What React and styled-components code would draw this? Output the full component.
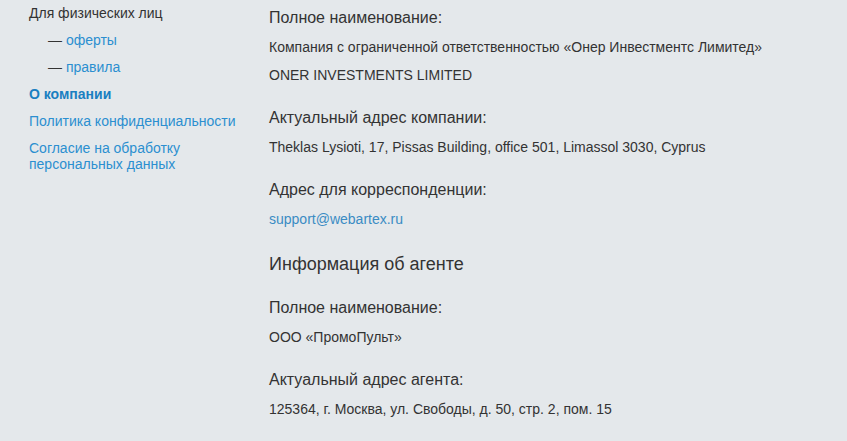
import React from "react";
import styled, { createGlobalStyle } from "styled-components";

const Global = createGlobalStyle`
  html, body { margin: 0; padding: 0; background: #e4e8eb; }
  body { font-family: "Liberation Sans", Arial, sans-serif; color: #333; }
`;

const Page = styled.div`
  display: flex;
  align-items: flex-start;
  min-height: 441px;
  background: #e4e8eb;
`;

const Sidebar = styled.nav`
  width: 240px;
  padding: 5px 0 0 29px;
  box-sizing: content-box;
  display: flex;
  flex-direction: column;
  gap: 11px;
`;

const NavItem = styled.a`
  display: block;
  font-size: 14px;
  line-height: 16px;
  text-decoration: none;
  color: ${(p) => (p.$plain ? "#333" : p.$active ? "#1a7fc1" : "#2b8fd0")};
  font-weight: ${(p) => (p.$active ? 700 : 400)};
  padding-left: ${(p) => (p.$sub ? "19px" : "0")};
`;

const Dash = styled.span`
  color: #333;
`;

const Main = styled.main`
  padding: 8px 0 0 0;
  display: flex;
  flex-direction: column;
  gap: 19px;
`;

const Section = styled.section`
  display: flex;
  flex-direction: column;
`;

const Label = styled.div`
  font-size: 16px;
  line-height: 20px;
  color: #333;
  margin-bottom: 5px;
`;

const Value = styled.div`
  font-size: 14px;
  line-height: 28px;
  color: #333;
`;

const Mail = styled.a`
  font-size: 14px;
  line-height: 28px;
  color: #3a8cc4;
  text-decoration: none;
`;

const Heading = styled.h3`
  margin: 0 0 3px;
  font-size: 18px;
  line-height: 24px;
  font-weight: 400;
  color: #333;
`;

export default function App() {
  return (
    <>
      <Global />
      <Page>
        <Sidebar>
          <NavItem $plain>Для физических лиц</NavItem>
          <NavItem $sub href="#">
            <Dash>— </Dash>оферты
          </NavItem>
          <NavItem $sub href="#">
            <Dash>— </Dash>правила
          </NavItem>
          <NavItem $active href="#">О компании</NavItem>
          <NavItem href="#">Политика конфиденциальности</NavItem>
          <NavItem href="#">
            Согласие на обработку
            <br />
            персональных данных
          </NavItem>
        </Sidebar>
        <Main>
          <Section>
            <Label>Полное наименование:</Label>
            <Value>Компания с ограниченной ответственностью «Онер Инвестментс Лимитед»</Value>
            <Value>ONER INVESTMENTS LIMITED</Value>
          </Section>
          <Section>
            <Label>Актуальный адрес компании:</Label>
            <Value>Theklas Lysioti, 17, Pissas Building, office 501, Limassol 3030, Cyprus</Value>
          </Section>
          <Section>
            <Label>Адрес для корреспонденции:</Label>
            <Mail href="#">support@webartex.ru</Mail>
          </Section>
          <Heading>Информация об агенте</Heading>
          <Section>
            <Label>Полное наименование:</Label>
            <Value>ООО «ПромоПульт»</Value>
          </Section>
          <Section>
            <Label>Актуальный адрес агента:</Label>
            <Value>125364, г. Москва, ул. Свободы, д. 50, стр. 2, пом. 15</Value>
          </Section>
        </Main>
      </Page>
    </>
  );
}
